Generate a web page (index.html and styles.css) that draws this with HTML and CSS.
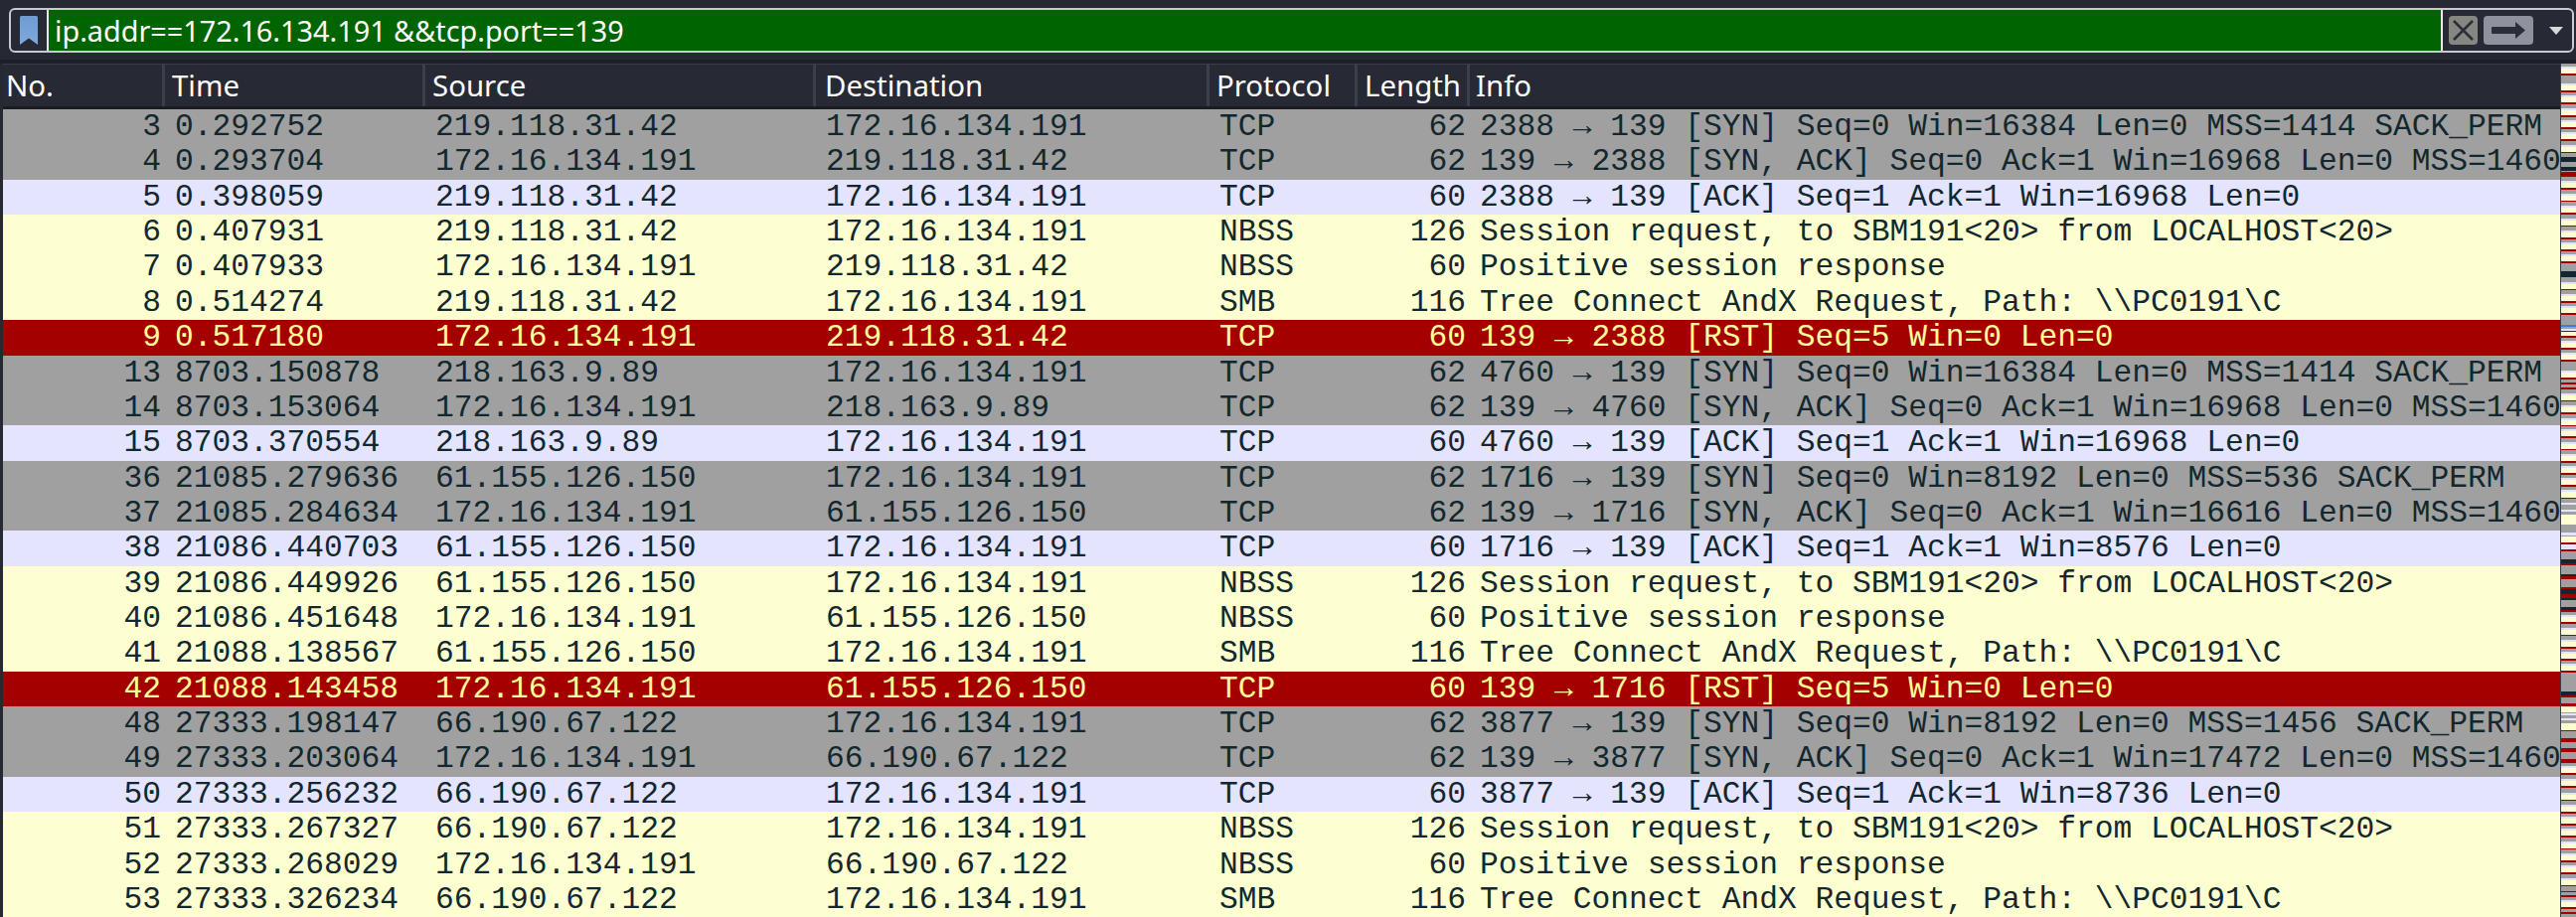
FILE: index.html
```html
<!DOCTYPE html>
<html lang="en">
<head>
<meta charset="utf-8">
<title>Wireshark packet list</title>
<link rel="stylesheet" href="styles.css">
</head>
<body>
<div class="app">
  <div class="filterbar">
    <div class="filter">
      <div class="bookmark"><svg width="18" height="29" viewBox="0 0 18 29"><defs><linearGradient id="bm" x1="0" y1="0" x2="0" y2="1"><stop offset="0" stop-color="#6d9bd2"/><stop offset="1" stop-color="#7fa9dc"/></linearGradient></defs><path d="M0 1.5Q0 0 1.5 0H16.5Q18 0 18 1.5V29L9 22.5L0 29Z" fill="url(#bm)"/></svg></div>
      <div class="expr">ip.addr==172.16.134.191 &amp;&amp;tcp.port==139</div>
      <div class="actions">
        <div class="btn clear"><svg width="29" height="29" viewBox="0 0 29 29"><path d="M5 5L24 24M24 5L5 24" stroke="#2b2e3a" stroke-width="2.6" fill="none"/></svg></div>
        <div class="btn apply"><svg width="50" height="29" viewBox="0 0 50 29"><path d="M9 11H32V6L42 14.5L32 23V18H9Q8 18 8 17V12Q8 11 9 11Z" fill="#2b2e3a"/></svg></div>
        <div class="drop"></div>
      </div>
    </div>
  </div>
  <div class="list">
    <div class="table">
      <div class="head">
        <div class="th">No.</div><div class="th">Time</div><div class="th">Source</div><div class="th th-dest">Destination</div><div class="th">Protocol</div><div class="th">Length</div><div class="th">Info</div>
      </div>
      <div class="body">
        <div class="row syn"><span class="no">3</span><span>0.292752</span><span>219.118.31.42</span><span>172.16.134.191</span><span>TCP</span><span class="len">62</span><span>2388 → 139 [SYN] Seq=0 Win=16384 Len=0 MSS=1414 SACK_PERM</span></div>
        <div class="row syn"><span class="no">4</span><span>0.293704</span><span>172.16.134.191</span><span>219.118.31.42</span><span>TCP</span><span class="len">62</span><span>139 → 2388 [SYN, ACK] Seq=0 Ack=1 Win=16968 Len=0 MSS=1460</span></div>
        <div class="row tcp"><span class="no">5</span><span>0.398059</span><span>219.118.31.42</span><span>172.16.134.191</span><span>TCP</span><span class="len">60</span><span>2388 → 139 [ACK] Seq=1 Ack=1 Win=16968 Len=0</span></div>
        <div class="row smb"><span class="no">6</span><span>0.407931</span><span>219.118.31.42</span><span>172.16.134.191</span><span>NBSS</span><span class="len">126</span><span>Session request, to SBM191&lt;20&gt; from LOCALHOST&lt;20&gt;</span></div>
        <div class="row smb"><span class="no">7</span><span>0.407933</span><span>172.16.134.191</span><span>219.118.31.42</span><span>NBSS</span><span class="len">60</span><span>Positive session response</span></div>
        <div class="row smb"><span class="no">8</span><span>0.514274</span><span>219.118.31.42</span><span>172.16.134.191</span><span>SMB</span><span class="len">116</span><span>Tree Connect AndX Request, Path: \\PC0191\C</span></div>
        <div class="row rst"><span class="no">9</span><span>0.517180</span><span>172.16.134.191</span><span>219.118.31.42</span><span>TCP</span><span class="len">60</span><span>139 → 2388 [RST] Seq=5 Win=0 Len=0</span></div>
        <div class="row syn"><span class="no">13</span><span>8703.150878</span><span>218.163.9.89</span><span>172.16.134.191</span><span>TCP</span><span class="len">62</span><span>4760 → 139 [SYN] Seq=0 Win=16384 Len=0 MSS=1414 SACK_PERM</span></div>
        <div class="row syn"><span class="no">14</span><span>8703.153064</span><span>172.16.134.191</span><span>218.163.9.89</span><span>TCP</span><span class="len">62</span><span>139 → 4760 [SYN, ACK] Seq=0 Ack=1 Win=16968 Len=0 MSS=1460</span></div>
        <div class="row tcp"><span class="no">15</span><span>8703.370554</span><span>218.163.9.89</span><span>172.16.134.191</span><span>TCP</span><span class="len">60</span><span>4760 → 139 [ACK] Seq=1 Ack=1 Win=16968 Len=0</span></div>
        <div class="row syn"><span class="no">36</span><span>21085.279636</span><span>61.155.126.150</span><span>172.16.134.191</span><span>TCP</span><span class="len">62</span><span>1716 → 139 [SYN] Seq=0 Win=8192 Len=0 MSS=536 SACK_PERM</span></div>
        <div class="row syn"><span class="no">37</span><span>21085.284634</span><span>172.16.134.191</span><span>61.155.126.150</span><span>TCP</span><span class="len">62</span><span>139 → 1716 [SYN, ACK] Seq=0 Ack=1 Win=16616 Len=0 MSS=1460</span></div>
        <div class="row tcp"><span class="no">38</span><span>21086.440703</span><span>61.155.126.150</span><span>172.16.134.191</span><span>TCP</span><span class="len">60</span><span>1716 → 139 [ACK] Seq=1 Ack=1 Win=8576 Len=0</span></div>
        <div class="row smb"><span class="no">39</span><span>21086.449926</span><span>61.155.126.150</span><span>172.16.134.191</span><span>NBSS</span><span class="len">126</span><span>Session request, to SBM191&lt;20&gt; from LOCALHOST&lt;20&gt;</span></div>
        <div class="row smb"><span class="no">40</span><span>21086.451648</span><span>172.16.134.191</span><span>61.155.126.150</span><span>NBSS</span><span class="len">60</span><span>Positive session response</span></div>
        <div class="row smb"><span class="no">41</span><span>21088.138567</span><span>61.155.126.150</span><span>172.16.134.191</span><span>SMB</span><span class="len">116</span><span>Tree Connect AndX Request, Path: \\PC0191\C</span></div>
        <div class="row rst"><span class="no">42</span><span>21088.143458</span><span>172.16.134.191</span><span>61.155.126.150</span><span>TCP</span><span class="len">60</span><span>139 → 1716 [RST] Seq=5 Win=0 Len=0</span></div>
        <div class="row syn"><span class="no">48</span><span>27333.198147</span><span>66.190.67.122</span><span>172.16.134.191</span><span>TCP</span><span class="len">62</span><span>3877 → 139 [SYN] Seq=0 Win=8192 Len=0 MSS=1456 SACK_PERM</span></div>
        <div class="row syn"><span class="no">49</span><span>27333.203064</span><span>172.16.134.191</span><span>66.190.67.122</span><span>TCP</span><span class="len">62</span><span>139 → 3877 [SYN, ACK] Seq=0 Ack=1 Win=17472 Len=0 MSS=1460</span></div>
        <div class="row tcp"><span class="no">50</span><span>27333.256232</span><span>66.190.67.122</span><span>172.16.134.191</span><span>TCP</span><span class="len">60</span><span>3877 → 139 [ACK] Seq=1 Ack=1 Win=8736 Len=0</span></div>
        <div class="row smb"><span class="no">51</span><span>27333.267327</span><span>66.190.67.122</span><span>172.16.134.191</span><span>NBSS</span><span class="len">126</span><span>Session request, to SBM191&lt;20&gt; from LOCALHOST&lt;20&gt;</span></div>
        <div class="row smb"><span class="no">52</span><span>27333.268029</span><span>172.16.134.191</span><span>66.190.67.122</span><span>NBSS</span><span class="len">60</span><span>Positive session response</span></div>
        <div class="row smb"><span class="no">53</span><span>27333.326234</span><span>66.190.67.122</span><span>172.16.134.191</span><span>SMB</span><span class="len">116</span><span>Tree Connect AndX Request, Path: \\PC0191\C</span></div>
      </div>
    </div>
    <div class="minimap">
      <svg class="stripes" width="15" height="859" viewBox="0 64 15 859" shape-rendering="crispEdges">
        <rect x="0" y="64" width="15" height="859" fill="#a0a0a0"/>
        <path fill="#e4e4ff" d="M0 67h15v2H0zM0 84h15v2H0zM0 96h15v2H0zM0 109h15v2H0zM0 121h15v2H0zM0 133h15v2H0zM0 146h15v2H0zM0 182h15v2H0zM0 195h15v2H0zM0 207h15v2H0zM0 220h15v2H0zM0 232h15v2H0zM0 244h15v2H0zM0 256h15v2H0zM0 284h15v2H0zM0 296h15v2H0zM0 308h15v2H0zM0 331h15v2H0zM0 343h15v2H0zM0 355h15v2H0zM0 373h15v2H0zM0 396h15v2H0zM0 408h15v2H0zM0 421h15v2H0zM0 432h15v2H0zM0 445h15v2H0zM0 457h15v2H0zM0 469h15v2H0zM0 481h15v2H0zM0 493h15v2H0zM0 506h15v2H0zM0 513h15v2H0zM0 536h15v3H0zM0 548h15v5H0zM0 619h15v2H0zM0 632h15v2H0zM0 644h15v2H0zM0 656h15v2H0zM0 668h15v2H0zM0 718h15v2H0zM0 723h15v2H0zM0 771h15v2H0zM0 784h15v2H0zM0 798h15v2H0zM0 810h15v2H0zM0 822h15v2H0zM0 834h15v2H0zM0 847h15v2H0zM0 859h15v2H0zM0 871h15v2H0zM0 884h15v2H0zM0 906h15v2H0z"/>
        <path fill="#feffd0" d="M0 69h15v5H0zM0 86h15v5H0zM0 98h15v5H0zM0 111h15v5H0zM0 123h15v5H0zM0 135h15v5H0zM0 148h15v5H0zM0 184h15v5H0zM0 197h15v5H0zM0 209h15v5H0zM0 222h15v5H0zM0 234h15v5H0zM0 246h15v5H0zM0 258h15v5H0zM0 286h15v5H0zM0 298h15v5H0zM0 310h15v5H0zM0 333h15v5H0zM0 345h15v5H0zM0 357h15v5H0zM0 375h15v5H0zM0 398h15v5H0zM0 410h15v5H0zM0 423h15v5H0zM0 434h15v5H0zM0 447h15v5H0zM0 459h15v5H0zM0 471h15v5H0zM0 483h15v5H0zM0 495h15v6H0zM0 518h15v10H0zM0 540h15v6H0zM0 621h15v5H0zM0 634h15v5H0zM0 646h15v5H0zM0 658h15v5H0zM0 670h15v5H0zM0 711h15v6H0zM0 728h15v7H0zM0 773h15v5H0zM0 786h15v5H0zM0 800h15v5H0zM0 812h15v5H0zM0 824h15v5H0zM0 836h15v5H0zM0 849h15v5H0zM0 861h15v5H0zM0 873h15v5H0zM0 886h15v5H0zM0 908h15v5H0z"/>
        <path fill="#a40000" d="M0 74h15v2H0zM0 91h15v2H0zM0 103h15v2H0zM0 116h15v2H0zM0 128h15v2H0zM0 140h15v2H0zM0 153h15v1H0zM0 173h15v5H0zM0 189h15v2H0zM0 202h15v1H0zM0 214h15v2H0zM0 227h15v1H0zM0 239h15v2H0zM0 251h15v2H0zM0 263h15v2H0zM0 291h15v1H0zM0 303h15v2H0zM0 315h15v2H0zM0 333h15v1H0zM0 338h15v2H0zM0 350h15v2H0zM0 362h15v2H0zM0 380h15v2H0zM0 385h15v2H0zM0 390h15v2H0zM0 403h15v1H0zM0 415h15v2H0zM0 428h15v1H0zM0 439h15v2H0zM0 452h15v1H0zM0 464h15v2H0zM0 476h15v2H0zM0 488h15v2H0zM0 501h15v1H0zM0 546h15v2H0zM0 553h15v2H0zM0 567h15v2H0zM0 580h15v3H0zM0 591h15v2H0zM0 598h15v4H0zM0 614h15v2H0zM0 626h15v2H0zM0 639h15v1H0zM0 651h15v2H0zM0 663h15v2H0zM0 675h15v2H0zM0 700h15v2H0zM0 708h15v3H0zM0 735h15v1H0zM0 743h15v4H0zM0 753h15v4H0zM0 764h15v4H0zM0 778h15v2H0zM0 791h15v2H0zM0 805h15v1H0zM0 817h15v2H0zM0 829h15v2H0zM0 841h15v2H0zM0 854h15v1H0zM0 866h15v2H0zM0 878h15v2H0zM0 891h15v1H0zM0 897h15v1H0zM0 901h15v2H0zM0 913h15v2H0zM0 918h15v2H0z"/>
        <path fill="#12272e" d="M0 158h15v5H0zM0 168h15v4H0zM0 175h15v1H0zM0 273h15v6H0zM0 563h15v4H0zM0 578h15v2H0zM0 593h15v5H0zM0 602h15v2H0zM0 611h15v3H0zM0 696h15v4H0z"/>
        <rect x="0" y="327" width="15" height="2" fill="#3b7ddb"/>
      </svg>
    </div>
  </div>
</div>
</body>
</html>
```
FILE: styles.css
```css
* { box-sizing: border-box; }
html, body { margin: 0; height: 100%; overflow: hidden; background: #262933; }
.app { height: 923px; display: flex; flex-direction: column; overflow: hidden; }
.filterbar { height: 64px; padding: 8px 2px 7px 9px; flex: none; border-bottom: 4px solid #1d2029; }
.filter { height: 45px; display: flex; border: 2px solid #c8cad0; border-radius: 6px; background: #272a35; overflow: hidden; }
.bookmark { width: 36px; flex: none; display: flex; justify-content: center; align-items: flex-start; padding-top: 6px; }
.expr { flex: 1; background: #006400; border-left: 2px solid #e8e8e8; border-right: 2px solid #e8e8e8; color: #fff; font: 28.8px/41px "Noto Sans", sans-serif; padding-left: 6px; white-space: nowrap; }
.actions { width: 130px; flex: none; display: flex; align-items: center; padding-left: 6px; }
.btn { height: 29px; border-radius: 4px; display: flex; }
.clear { width: 29px; background: #858780; margin-right: 6px; }
.apply { width: 50px; background: #8f919c; }
.drop { margin-left: 16px; width: 0; height: 0; border-left: 7px solid transparent; border-right: 7px solid transparent; border-top: 8px solid #d8d8d8; }
.list { flex: 1; display: flex; min-height: 0; padding-left: 3px; }
.table { flex: 1; min-width: 0; display: flex; flex-direction: column; overflow: hidden; }
.head, .row { display: grid; grid-template-columns: 163px 262px 393px 396px 149px 113px 1097px; }
.head { height: 46px; flex: none; background: #272a34; border-top: 1px solid #3a3d48; border-bottom: 3px solid #1a1c24; }
.th { color: #fff; font: 29.4px/43px "Noto Sans", sans-serif; padding-left: 7px; border-right: 3px solid #3c3f4a; white-space: nowrap; overflow: hidden; }
.th:first-child { padding-left: 3px; }
.th:last-child { border-right: 0; padding-left: 6px; }
.th-dest { padding-left: 9px; }
.row { height: 35.36px; font: 31.25px/36px "Liberation Mono", monospace; color: #12272e; white-space: pre; overflow: hidden; }
.row span { padding-left: 10px; overflow: hidden; }
.row .no, .row .len { text-align: right; padding: 0 4px 0 0; }
.syn { background: #a0a0a0; }
.tcp { background: #e4e4ff; }
.smb { background: #feffd0; }
.rst { background: #a40000; color: #fffc9c; }
.minimap { width: 16px; flex: none; border-left: 1px solid #3a3d48; overflow: hidden; }
.stripes { display: block; }
```
